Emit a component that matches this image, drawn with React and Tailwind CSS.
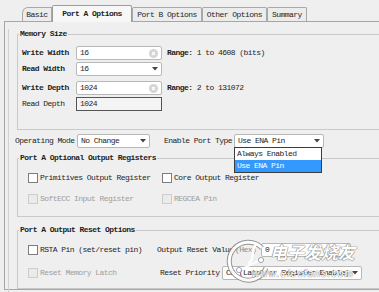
import React from 'react';

const Arrow = () => (
  <svg width="6" height="4" viewBox="0 0 6 4" className="shrink-0">
    <path d="M0 0 L6 0 L3 3.5 Z" fill="#444" />
  </svg>
);

const ClearIcon = () => (
  <span className="shrink-0 w-[9px] h-[9px] rounded-full bg-[#d4d4d4] flex items-center justify-center">
    <svg width="5" height="5" viewBox="0 0 5 5">
      <path d="M1 1 L4 4 M4 1 L1 4" stroke="#fff" strokeWidth="1.1" />
    </svg>
  </span>
);

const Field = ({ value, width = 'w-[86px]', icon }) => (
  <div className={`${width} shrink-0 h-[14px] flex items-center justify-between bg-white border border-[#b8b8b8] rounded-[2px] pl-[3px] pr-[3px]`}>
    <span>{value}</span>
    {icon === 'clear' && <ClearIcon />}
    {icon === 'arrow' && <Arrow />}
  </div>
);

const Check = ({ disabled }) => (
  <span
    className={`shrink-0 w-[10px] h-[10px] border ${disabled ? 'border-[#cdcdcd] bg-[#ebebeb]' : 'border-[#7d7d7d] bg-white'}`}
  />
);

const Tab = ({ children, active, width, first }) => (
  <div
    className={
      active
        ? `${width} h-[17px] flex items-center justify-center font-bold bg-[#f7f7f7] border border-b-0 border-[#9c9c9c] rounded-t-[2px] -mb-px relative z-10`
        : `${width} h-[14px] flex items-center justify-center bg-[#ececec] border border-b-0 border-[#a8a8a8] ${first ? 'rounded-tl-[6px]' : 'rounded-t-[2px]'}`
    }
  >
    {children}
  </div>
);

export default function App() {
  return (
    <div className="relative w-[379px] h-[292px] overflow-hidden whitespace-nowrap bg-[#efefef] font-['Liberation_Mono',monospace] text-[8px] leading-[10px] tracking-[-0.55px] text-[#1e1e1e]">
      {/* tab strip */}
      <div className="flex items-end h-[21px] pl-[22px]">
        <Tab width="w-[30px]" first>Basic</Tab>
        <Tab width="w-[80px]" active>Port A Options</Tab>
        <Tab width="w-[70px]">Port B Options</Tab>
        <Tab width="w-[65px]">Other Options</Tab>
        <Tab width="w-[40px]">Summary</Tab>
      </div>

      <div className="ml-[4px] h-[269px] border-l border-t border-b border-[#a6a6a6]">
        <div className="ml-[3px] h-full border-l border-[#d2d2d2]">
          {/* Memory Size */}
          <fieldset className="mt-[7px] ml-[8px] w-[380px] border border-[#c9c9c9] pb-[18px]">
            <legend className="ml-[1px] px-[1px] font-bold">Memory Size</legend>
            <div className="pl-[4px] pt-[7px] flex flex-col">
              <div className="flex items-center">
                <span className="w-[54px] font-bold">Write Width</span>
                <Field value="16" icon="clear" />
                <span className="ml-[5px]"><b>Range:</b> 1 to 4608 (bits)</span>
              </div>
              <div className="flex items-center mt-[2px]">
                <span className="w-[54px] font-bold">Read Width</span>
                <Field value="16" icon="arrow" />
              </div>
              <div className="flex items-center mt-[5px]">
                <span className="w-[54px] font-bold">Write Depth</span>
                <Field value="1024" icon="clear" />
                <span className="ml-[5px]"><b>Range:</b> 2 to 131072</span>
              </div>
              <div className="flex items-center mt-[2px]">
                <span className="w-[54px]">Read Depth</span>
                <div className="w-[86px] h-[14px] flex items-center bg-[#f4f4f4] border border-[#555] pl-[3px]">1024</div>
              </div>
            </div>
          </fieldset>

          {/* operating mode row */}
          <div className="relative mt-[4px] ml-[6px] flex items-center">
            <span className="w-[62px]">Operating Mode</span>
            <Field value="No Change" icon="arrow" width="w-[73px]" />
            <span className="ml-[14px] w-[70px]">Enable Port Type</span>
            <Field value="Use ENA Pin" icon="arrow" width="w-[90px]" />
            <div className="absolute left-[219px] top-[13px] z-20 w-[88px] bg-white border border-[#3c3c3c] flex flex-col">
              <span className="h-[12px] flex items-center pl-[2px]">Always Enabled</span>
              <span className="h-[12px] flex items-center pl-[2px] bg-[#3399ff] text-white">Use ENA Pin</span>
            </div>
          </div>

          {/* optional output registers */}
          <fieldset className="mt-[5px] ml-[8px] w-[380px] border border-[#c9c9c9] pb-[10px]">
            <legend className="ml-[1px] px-[1px] font-bold">Port A Optional Output Registers</legend>
            <div className="pl-[10px] pt-[8px] flex flex-col">
              <div className="flex items-center h-[14px]">
                <div className="w-[134px] flex items-center gap-[2px]">
                  <Check />
                  <span>Primitives Output Register</span>
                </div>
                <div className="flex items-center gap-[2px]">
                  <Check />
                  <span>Core Output Register</span>
                </div>
              </div>
              <div className="flex items-center h-[14px] mt-[7px] text-[#9d9d9d]">
                <div className="w-[134px] flex items-center gap-[2px]">
                  <Check disabled />
                  <span>SoftECC Input Register</span>
                </div>
                <div className="flex items-center gap-[2px]">
                  <Check disabled />
                  <span>REGCEA Pin</span>
                </div>
              </div>
            </div>
          </fieldset>

          {/* output reset options */}
          <fieldset className="mt-[8px] ml-[8px] w-[380px] border border-[#c9c9c9] pb-[8px]">
            <legend className="ml-[1px] px-[1px] font-bold">Port A Output Reset Options</legend>
            <div className="pl-[10px] pt-[8px] flex flex-col">
              <div className="flex items-center h-[14px]">
                <div className="w-[129px] shrink-0 flex items-center gap-[2px]">
                  <Check />
                  <span>RSTA Pin (set/reset pin)</span>
                </div>
                <span className="w-[78px] shrink-0">Output Reset Value</span>
                <span className="w-[26px] shrink-0 text-[#8a8a8a]">(Hex)</span>
                <Field value="0" width="w-[90px]" />
              </div>
              <div className="flex items-center h-[14px] mt-[9px]">
                <div className="w-[132px] shrink-0 flex items-center gap-[2px] text-[#9d9d9d]">
                  <Check disabled />
                  <span>Reset Memory Latch</span>
                </div>
                <span className="w-[62px] shrink-0">Reset Priority</span>
                <Field value="CE (Latch or Register Enable)" icon="arrow" width="w-[140px]" />
              </div>
            </div>
          </fieldset>
        </div>
      </div>

      {/* watermark */}
      <div className="absolute left-[226px] top-[238px] z-30 pointer-events-none opacity-90">
        <svg width="46" height="46" viewBox="0 0 46 46">
          <path d="M36 10 A19 19 0 1 0 40 30" fill="none" stroke="#8a8a8a" strokeWidth="5" />
          <path d="M36 10 A19 19 0 1 0 40 30" fill="none" stroke="#fff" strokeWidth="3" />
          <path d="M30 6 C24 14 30 20 22 26" fill="none" stroke="#fff" strokeWidth="2.5" />
          <path d="M14 32 L34 22" stroke="#fff" strokeWidth="2" />
          <circle cx="13" cy="32" r="2.6" fill="#fff" stroke="#888" strokeWidth="0.8" />
          <circle cx="35" cy="22" r="2.6" fill="#fff" stroke="#888" strokeWidth="0.8" />
        </svg>
      </div>
      <div className="absolute left-[270px] top-[242px] z-30 pointer-events-none font-['Noto_Sans_CJK_SC',sans-serif] font-bold italic text-[17px] leading-[20px] tracking-[0px] text-white [text-shadow:0_0_1px_#777,0_0_1px_#777,0_0_1px_#777]">
        电子发烧友
      </div>
      <div className="absolute left-[252px] top-[268px] z-30 pointer-events-none font-['Liberation_Sans',sans-serif] italic text-[10px] leading-[11px] tracking-[1.2px] text-white [text-shadow:0_0_1px_#777,0_0_1px_#777]">
        www.elecfans.com
      </div>
    </div>
  );
}
